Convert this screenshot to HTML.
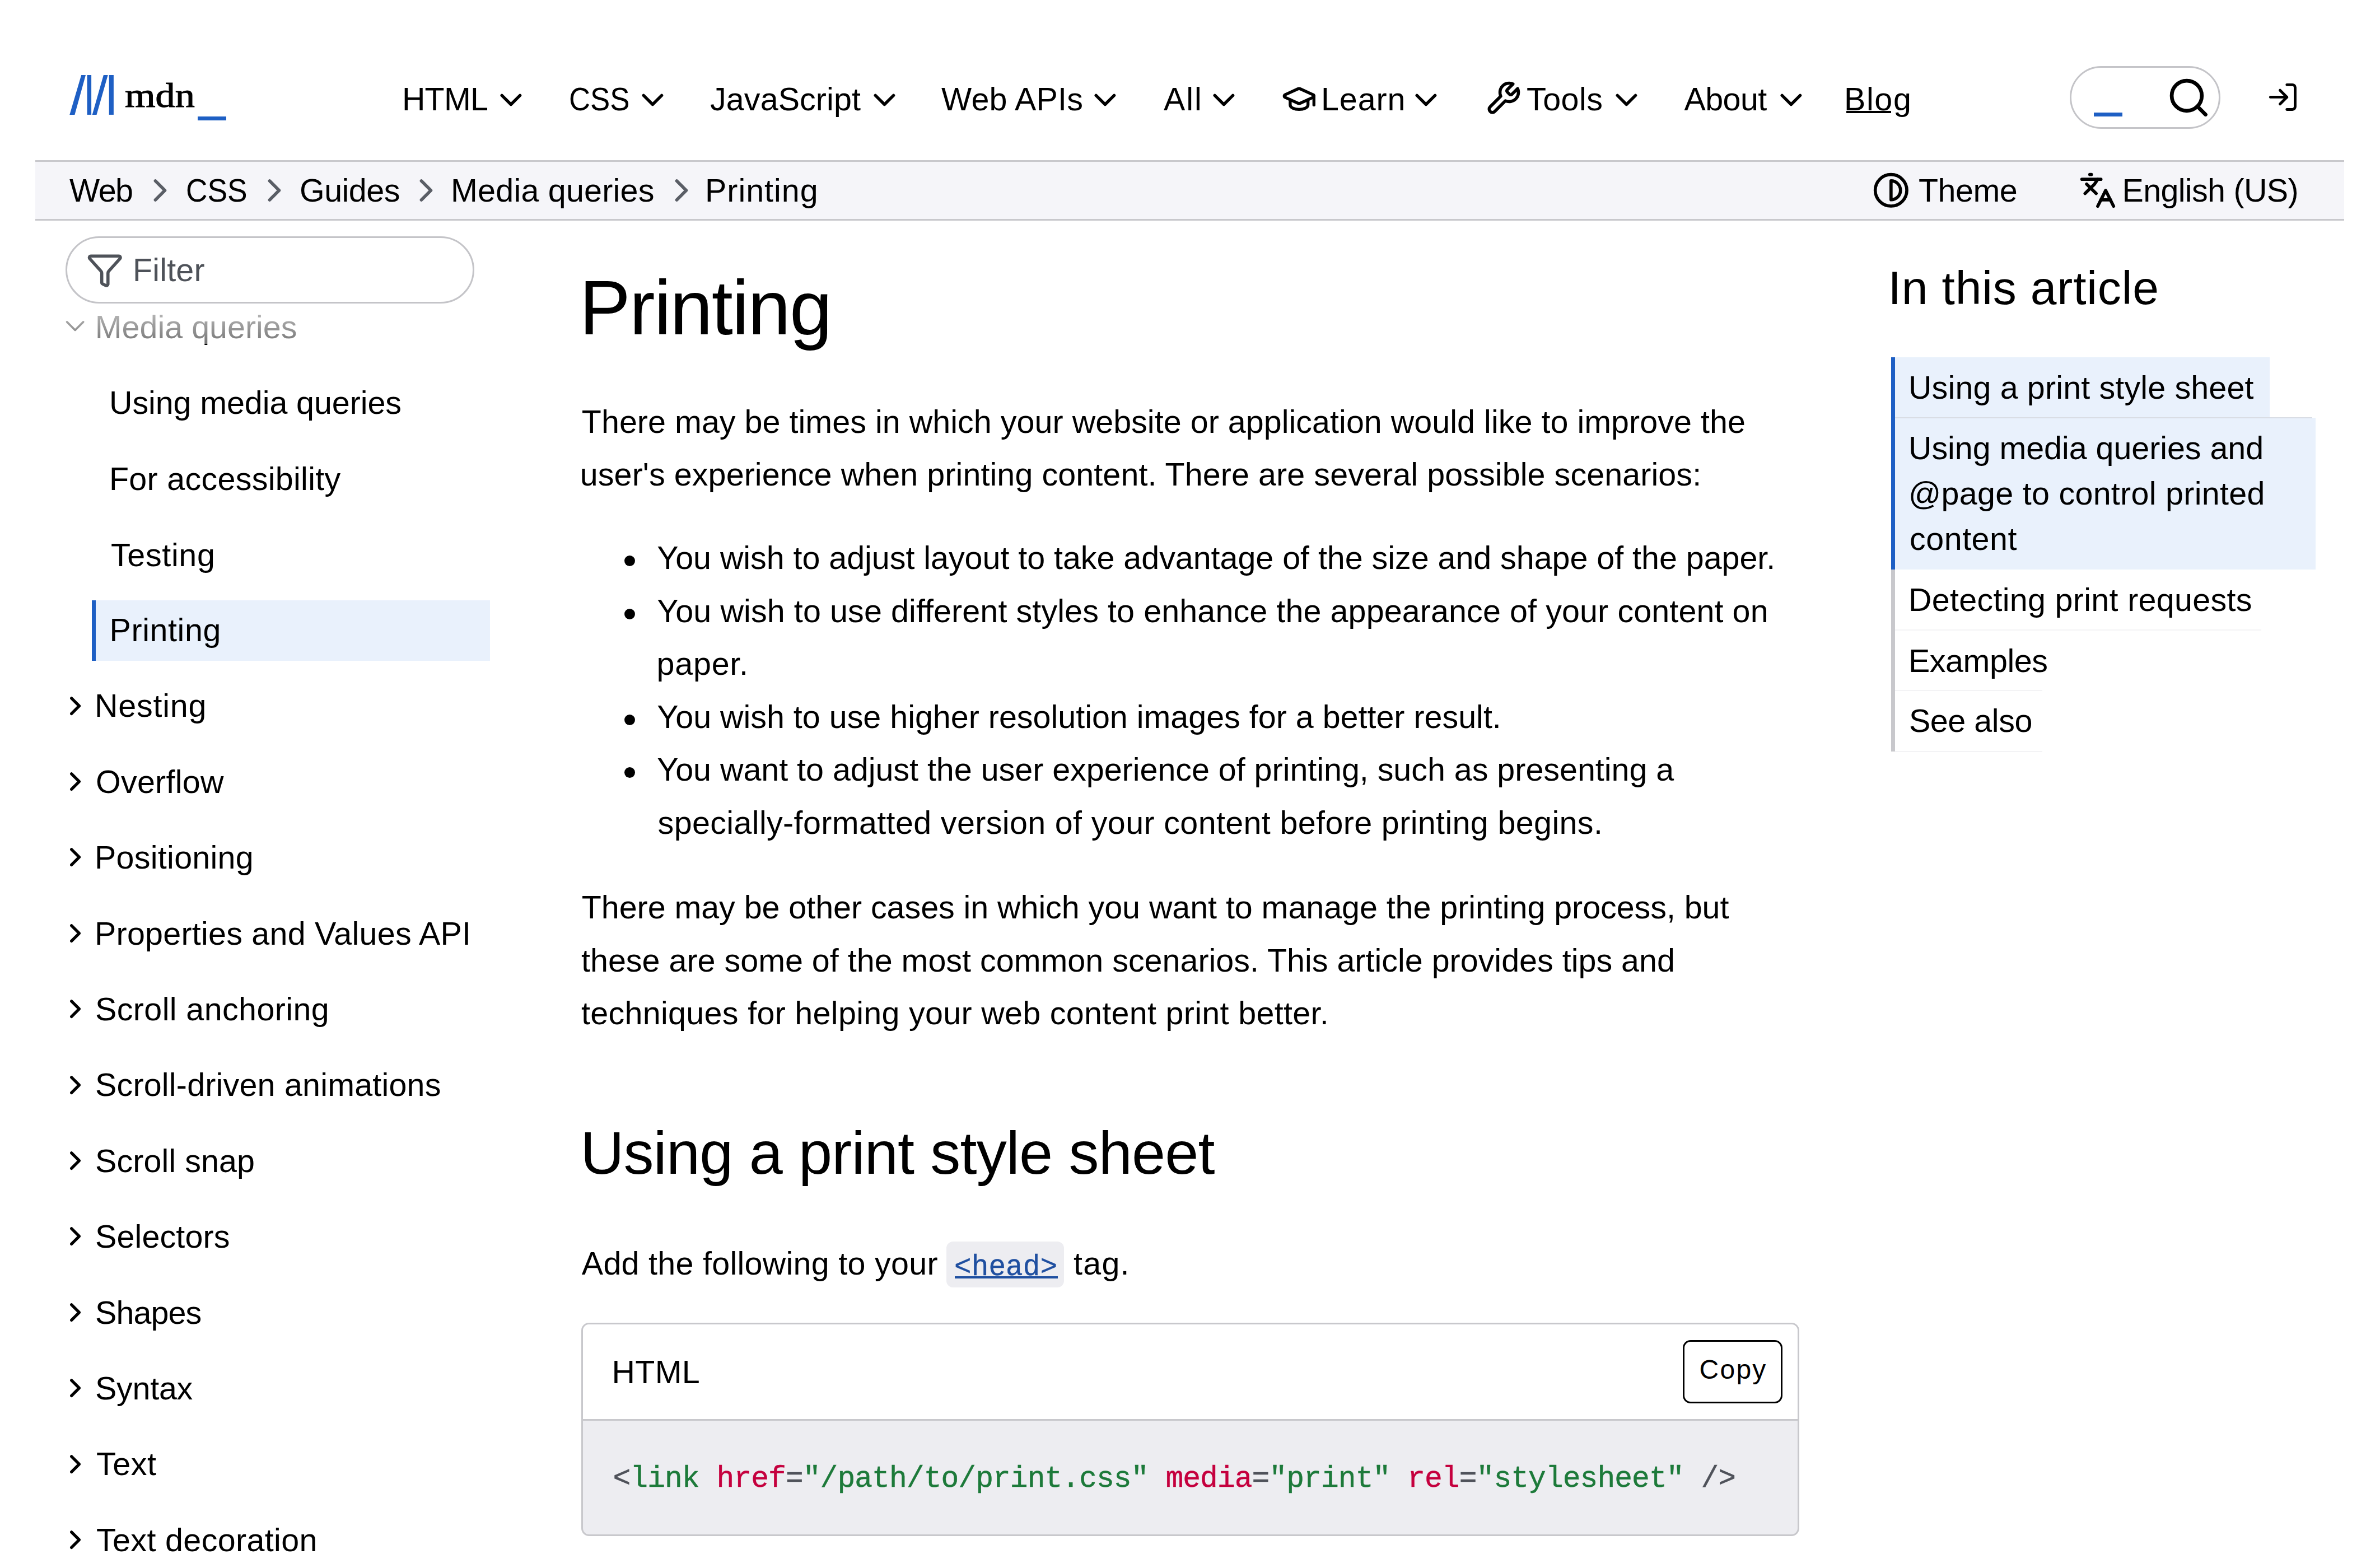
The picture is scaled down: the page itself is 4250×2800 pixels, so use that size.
<!DOCTYPE html>
<html><head><meta charset="utf-8"><title>Printing - CSS | MDN</title>
<style>
html,body{margin:0;padding:0;background:#fff;width:4250px;height:2800px;overflow:hidden;}
body{position:relative;font-family:'Liberation Sans', sans-serif;color:#000;}
.t{position:absolute;white-space:pre;}
.r{position:absolute;}
</style></head><body>
<svg class="r" style="left:120.0px;top:130.0px" width="90" height="80" viewBox="0 0 90 80"><g fill="#1e5fc4"><polygon points="4.3,74.9 13.4,74.9 33,4 25.2,4"/><rect x="35.6" y="4" width="7.5" height="70.9"/><polygon points="44.7,74.9 52.5,74.9 72.7,4 64.9,4"/><rect x="74.7" y="4" width="8.2" height="70.9"/></g></svg>
<div class="t" style="left:223.0px;top:139.6px;font-size:61px;line-height:61px;color:#000;font-family:'Liberation Serif', serif;letter-spacing:0.000px;-webkit-text-stroke:1.1px #000;transform:scaleX(1.15);transform-origin:0 0;">mdn</div>
<div class="r" style="left:352.5px;top:208.3px;width:51.5px;height:6.5px;background:#1e5fc4"></div>
<div class="t" style="left:717.9px;top:149.0px;font-size:57.4px;line-height:57.4px;color:#000;font-family:'Liberation Sans', sans-serif;letter-spacing:-0.733px;">HTML</div>
<svg class="r" style="left:879.5px;top:145.7px" width="64.8" height="64.8" viewBox="0 0 24 24" fill="none" stroke="#000" stroke-width="2" stroke-linecap="round" stroke-linejoin="round"><path d="m6 9 6 6 6-6"/></svg>
<div class="t" style="left:1016.0px;top:149.0px;font-size:57.4px;line-height:57.4px;color:#000;font-family:'Liberation Sans', sans-serif;letter-spacing:0.000px;transform:scaleX(0.9197);transform-origin:0 0;">CSS</div>
<svg class="r" style="left:1132.5px;top:145.7px" width="64.8" height="64.8" viewBox="0 0 24 24" fill="none" stroke="#000" stroke-width="2" stroke-linecap="round" stroke-linejoin="round"><path d="m6 9 6 6 6-6"/></svg>
<div class="t" style="left:1268.0px;top:149.0px;font-size:57.4px;line-height:57.4px;color:#000;font-family:'Liberation Sans', sans-serif;letter-spacing:0.111px;">JavaScript</div>
<svg class="r" style="left:1546.5px;top:145.7px" width="64.8" height="64.8" viewBox="0 0 24 24" fill="none" stroke="#000" stroke-width="2" stroke-linecap="round" stroke-linejoin="round"><path d="m6 9 6 6 6-6"/></svg>
<div class="t" style="left:1681.0px;top:149.0px;font-size:57.4px;line-height:57.4px;color:#000;font-family:'Liberation Sans', sans-serif;letter-spacing:0.286px;">Web APIs</div>
<svg class="r" style="left:1941.1px;top:145.7px" width="64.8" height="64.8" viewBox="0 0 24 24" fill="none" stroke="#000" stroke-width="2" stroke-linecap="round" stroke-linejoin="round"><path d="m6 9 6 6 6-6"/></svg>
<div class="t" style="left:2078.0px;top:149.0px;font-size:57.4px;line-height:57.4px;color:#000;font-family:'Liberation Sans', sans-serif;letter-spacing:2.000px;">All</div>
<svg class="r" style="left:2152.5px;top:145.7px" width="64.8" height="64.8" viewBox="0 0 24 24" fill="none" stroke="#000" stroke-width="2" stroke-linecap="round" stroke-linejoin="round"><path d="m6 9 6 6 6-6"/></svg>
<div class="t" style="left:2359.0px;top:149.0px;font-size:57.4px;line-height:57.4px;color:#000;font-family:'Liberation Sans', sans-serif;letter-spacing:0.900px;">Learn</div>
<svg class="r" style="left:2514.2px;top:145.7px" width="64.8" height="64.8" viewBox="0 0 24 24" fill="none" stroke="#000" stroke-width="2" stroke-linecap="round" stroke-linejoin="round"><path d="m6 9 6 6 6-6"/></svg>
<div class="t" style="left:2726.0px;top:149.0px;font-size:57.4px;line-height:57.4px;color:#000;font-family:'Liberation Sans', sans-serif;letter-spacing:0.500px;">Tools</div>
<svg class="r" style="left:2871.5px;top:145.7px" width="64.8" height="64.8" viewBox="0 0 24 24" fill="none" stroke="#000" stroke-width="2" stroke-linecap="round" stroke-linejoin="round"><path d="m6 9 6 6 6-6"/></svg>
<div class="t" style="left:3007.5px;top:149.0px;font-size:57.4px;line-height:57.4px;color:#000;font-family:'Liberation Sans', sans-serif;letter-spacing:-0.550px;">About</div>
<svg class="r" style="left:3165.5px;top:145.7px" width="64.8" height="64.8" viewBox="0 0 24 24" fill="none" stroke="#000" stroke-width="2" stroke-linecap="round" stroke-linejoin="round"><path d="m6 9 6 6 6-6"/></svg>
<div class="t" style="left:3293.0px;top:149.0px;font-size:57.4px;line-height:57.4px;color:#000;font-family:'Liberation Sans', sans-serif;letter-spacing:1.667px;">Blog</div>
<div class="r" style="left:3297.0px;top:198.0px;width:80.0px;height:3.5px;background:#000;"></div>
<svg class="r" style="left:2287.6px;top:145.0px" width="63.6" height="63.6" viewBox="0 0 24 24" fill="none" stroke="#000" stroke-width="2" stroke-linecap="round" stroke-linejoin="round"><path d="M21.42 10.922a1 1 0 0 0-.019-1.838L12.83 5.18a2 2 0 0 0-1.66 0L2.6 9.08a1 1 0 0 0 0 1.832l8.57 3.908a2 2 0 0 0 1.66 0z"/><path d="M22 10v6"/><path d="M6 12.5V16a6 3 0 0 0 12 0v-3.5"/></svg>
<svg class="r" style="left:2651.0px;top:143.0px" width="66.0" height="66.0" viewBox="0 0 24 24" fill="none" stroke="#000" stroke-width="2" stroke-linecap="round" stroke-linejoin="round"><path d="M14.7 6.3a1 1 0 0 0 0 1.4l1.6 1.6a1 1 0 0 0 1.4 0l3.77-3.77a6 6 0 0 1-7.94 7.94l-6.91 6.91a2.12 2.12 0 0 1-3-3l6.91-6.91a6 6 0 0 1 7.940-7.94l-3.76 3.76z"/></svg>
<div class="r" style="left:3696.0px;top:118.0px;width:269.0px;height:112.0px;border:3px solid #c4c4c8;border-radius:56px;box-sizing:border-box;"></div>
<div class="r" style="left:3739.0px;top:201.0px;width:51.0px;height:6.5px;background:#1e5fc4"></div>
<svg class="r" style="left:3868.0px;top:134.0px" width="80.6" height="80.6" viewBox="0 0 24 24" fill="none" stroke="#000" stroke-width="2" stroke-linecap="round" stroke-linejoin="round"><circle cx="11" cy="11" r="8"/><path d="m21 21-4.3-4.3"/></svg>
<svg class="r" style="left:4047.0px;top:143.9px" width="58.8" height="58.8" viewBox="0 0 24 24" fill="none" stroke="#000" stroke-width="2" stroke-linecap="round" stroke-linejoin="round"><path d="M15 3h4a2 2 0 0 1 2 2v14a2 2 0 0 1-2 2h-4"/><path d="m10 17 5-5-5-5"/><path d="M15 12H3"/></svg>
<div class="r" style="left:63.0px;top:286.0px;width:4123.0px;height:108.0px;background:#f5f5f9;border-top:3px solid #c8c8cc;border-bottom:3px solid #c8c8cc;box-sizing:border-box;"></div>
<div class="t" style="left:124.0px;top:311.6px;font-size:57.4px;line-height:57.4px;color:#000;font-family:'Liberation Sans', sans-serif;letter-spacing:-1.500px;">Web</div>
<div class="t" style="left:332.0px;top:311.6px;font-size:57.4px;line-height:57.4px;color:#000;font-family:'Liberation Sans', sans-serif;letter-spacing:0.000px;transform:scaleX(0.9286);transform-origin:0 0;">CSS</div>
<div class="t" style="left:535.0px;top:311.6px;font-size:57.4px;line-height:57.4px;color:#000;font-family:'Liberation Sans', sans-serif;letter-spacing:-0.480px;">Guides</div>
<div class="t" style="left:805.0px;top:311.6px;font-size:57.4px;line-height:57.4px;color:#000;font-family:'Liberation Sans', sans-serif;letter-spacing:0.250px;">Media queries</div>
<div class="t" style="left:1259.0px;top:311.6px;font-size:57.4px;line-height:57.4px;color:#000;font-family:'Liberation Sans', sans-serif;letter-spacing:1.000px;">Printing</div>
<svg class="r" style="left:252.2px;top:305.9px" width="67.9" height="67.9" viewBox="0 0 24 24" fill="none" stroke="#5a5e66" stroke-width="2" stroke-linecap="round" stroke-linejoin="round"><path d="m9 18 6-6-6-6"/></svg>
<svg class="r" style="left:456.1px;top:305.9px" width="67.9" height="67.9" viewBox="0 0 24 24" fill="none" stroke="#5a5e66" stroke-width="2" stroke-linecap="round" stroke-linejoin="round"><path d="m9 18 6-6-6-6"/></svg>
<svg class="r" style="left:727.1px;top:305.9px" width="67.9" height="67.9" viewBox="0 0 24 24" fill="none" stroke="#5a5e66" stroke-width="2" stroke-linecap="round" stroke-linejoin="round"><path d="m9 18 6-6-6-6"/></svg>
<svg class="r" style="left:1182.7px;top:305.9px" width="67.9" height="67.9" viewBox="0 0 24 24" fill="none" stroke="#5a5e66" stroke-width="2" stroke-linecap="round" stroke-linejoin="round"><path d="m9 18 6-6-6-6"/></svg>
<svg class="r" style="left:3342.9px;top:306.2px" width="67.7" height="67.7" viewBox="0 0 24 24" fill="none" stroke="#000" stroke-width="2" stroke-linecap="round" stroke-linejoin="round"><circle cx="12" cy="12" r="10"/><path d="M12 18a6 6 0 0 0 0-12v12z"/></svg>
<div class="t" style="left:3426.0px;top:311.6px;font-size:57.4px;line-height:57.4px;color:#000;font-family:'Liberation Sans', sans-serif;letter-spacing:-0.500px;">Theme</div>
<svg class="r" style="left:3711.9px;top:306.2px" width="67.9" height="67.9" viewBox="0 0 24 24" fill="none" stroke="#000" stroke-width="2" stroke-linecap="round" stroke-linejoin="round"><path d="m5 8 6 6"/><path d="m4 14 6-6 2-3"/><path d="M2 5h12"/><path d="M7 2h1"/><path d="m22 22-5-10-5 10"/><path d="M14 18h6"/></svg>
<div class="t" style="left:3789.5px;top:311.6px;font-size:57.4px;line-height:57.4px;color:#000;font-family:'Liberation Sans', sans-serif;letter-spacing:-0.636px;">English (US)</div>
<div class="r" style="left:117.0px;top:422.0px;width:730.0px;height:120.0px;border:3px solid #c4c4c8;border-radius:60px;box-sizing:border-box;"></div>
<svg class="r" style="left:154.4px;top:448.8px" width="66.5" height="66.5" viewBox="0 0 24 24" fill="none" stroke="#4e5259" stroke-width="2" stroke-linecap="round" stroke-linejoin="round"><path d="M10 20a1 1 0 0 0 .553.895l2 1A1 1 0 0 0 14 21v-7a2 2 0 0 1 .517-1.341L21.74 4.67A1 1 0 0 0 21 3H3a1 1 0 0 0-.742 1.67l7.225 7.989A2 2 0 0 1 10 14z"/></svg>
<div class="t" style="left:237.0px;top:453.9px;font-size:57.4px;line-height:57.4px;color:#4e5259;font-family:'Liberation Sans', sans-serif;letter-spacing:0.200px;">Filter</div>
<svg class="r" style="left:104.8px;top:553.0px" width="58.3" height="58.3" viewBox="0 0 24 24" fill="none" stroke="#000" stroke-width="1.5" stroke-linecap="round" stroke-linejoin="round"><path d="m6 9 6 6 6-6"/></svg>
<div class="t" style="left:169.8px;top:556.1px;font-size:57.4px;line-height:57.4px;color:#000;font-family:'Liberation Sans', sans-serif;letter-spacing:0.017px;">Media queries</div>
<div class="r" style="left:95.0px;top:545.0px;width:505.0px;height:69.0px;background:linear-gradient(rgba(255,255,255,.78), rgba(255,255,255,.46));"></div>
<div class="t" style="left:195.0px;top:690.8px;font-size:57.4px;line-height:57.4px;color:#000;font-family:'Liberation Sans', sans-serif;letter-spacing:-0.067px;">Using media queries</div>
<div class="t" style="left:195.0px;top:827.0px;font-size:57.4px;line-height:57.4px;color:#000;font-family:'Liberation Sans', sans-serif;letter-spacing:0.312px;">For accessibility</div>
<div class="t" style="left:198.0px;top:962.6px;font-size:57.4px;line-height:57.4px;color:#000;font-family:'Liberation Sans', sans-serif;letter-spacing:0.667px;">Testing</div>
<div class="r" style="left:164.0px;top:1072.0px;width:711.0px;height:108.0px;background:#e9f1fc;"></div>
<div class="r" style="left:164.0px;top:1072.0px;width:7.0px;height:108.0px;background:#1e5fc4;"></div>
<div class="t" style="left:195.6px;top:1097.4px;font-size:57.4px;line-height:57.4px;color:#000;font-family:'Liberation Sans', sans-serif;letter-spacing:0.600px;">Printing</div>
<div class="t" style="left:169.0px;top:1232.4px;font-size:57.4px;line-height:57.4px;color:#000;font-family:'Liberation Sans', sans-serif;letter-spacing:0.800px;">Nesting</div>
<svg class="r" style="left:107.1px;top:1232.5px" width="55.2" height="55.2" viewBox="0 0 24 24" fill="none" stroke="#000" stroke-width="2.3" stroke-linecap="round" stroke-linejoin="round"><path d="m9 18 6-6-6-6"/></svg>
<div class="t" style="left:171.0px;top:1367.8px;font-size:57.4px;line-height:57.4px;color:#000;font-family:'Liberation Sans', sans-serif;letter-spacing:0.286px;">Overflow</div>
<svg class="r" style="left:107.1px;top:1367.9px" width="55.2" height="55.2" viewBox="0 0 24 24" fill="none" stroke="#000" stroke-width="2.3" stroke-linecap="round" stroke-linejoin="round"><path d="m9 18 6-6-6-6"/></svg>
<div class="t" style="left:169.0px;top:1503.2px;font-size:57.4px;line-height:57.4px;color:#000;font-family:'Liberation Sans', sans-serif;letter-spacing:0.300px;">Positioning</div>
<svg class="r" style="left:107.1px;top:1503.3px" width="55.2" height="55.2" viewBox="0 0 24 24" fill="none" stroke="#000" stroke-width="2.3" stroke-linecap="round" stroke-linejoin="round"><path d="m9 18 6-6-6-6"/></svg>
<div class="t" style="left:169.0px;top:1638.6px;font-size:57.4px;line-height:57.4px;color:#000;font-family:'Liberation Sans', sans-serif;letter-spacing:0.258px;">Properties and Values API</div>
<svg class="r" style="left:107.1px;top:1638.7px" width="55.2" height="55.2" viewBox="0 0 24 24" fill="none" stroke="#000" stroke-width="2.3" stroke-linecap="round" stroke-linejoin="round"><path d="m9 18 6-6-6-6"/></svg>
<div class="t" style="left:170.0px;top:1774.0px;font-size:57.4px;line-height:57.4px;color:#000;font-family:'Liberation Sans', sans-serif;letter-spacing:0.413px;">Scroll anchoring</div>
<svg class="r" style="left:107.1px;top:1774.1px" width="55.2" height="55.2" viewBox="0 0 24 24" fill="none" stroke="#000" stroke-width="2.3" stroke-linecap="round" stroke-linejoin="round"><path d="m9 18 6-6-6-6"/></svg>
<div class="t" style="left:170.0px;top:1909.4px;font-size:57.4px;line-height:57.4px;color:#000;font-family:'Liberation Sans', sans-serif;letter-spacing:0.217px;">Scroll-driven animations</div>
<svg class="r" style="left:107.1px;top:1909.5px" width="55.2" height="55.2" viewBox="0 0 24 24" fill="none" stroke="#000" stroke-width="2.3" stroke-linecap="round" stroke-linejoin="round"><path d="m9 18 6-6-6-6"/></svg>
<div class="t" style="left:170.0px;top:2044.8px;font-size:57.4px;line-height:57.4px;color:#000;font-family:'Liberation Sans', sans-serif;letter-spacing:0.100px;">Scroll snap</div>
<svg class="r" style="left:107.1px;top:2044.9px" width="55.2" height="55.2" viewBox="0 0 24 24" fill="none" stroke="#000" stroke-width="2.3" stroke-linecap="round" stroke-linejoin="round"><path d="m9 18 6-6-6-6"/></svg>
<div class="t" style="left:170.0px;top:2180.2px;font-size:57.4px;line-height:57.4px;color:#000;font-family:'Liberation Sans', sans-serif;letter-spacing:0.150px;">Selectors</div>
<svg class="r" style="left:107.1px;top:2180.3px" width="55.2" height="55.2" viewBox="0 0 24 24" fill="none" stroke="#000" stroke-width="2.3" stroke-linecap="round" stroke-linejoin="round"><path d="m9 18 6-6-6-6"/></svg>
<div class="t" style="left:170.0px;top:2315.6px;font-size:57.4px;line-height:57.4px;color:#000;font-family:'Liberation Sans', sans-serif;letter-spacing:-0.880px;">Shapes</div>
<svg class="r" style="left:107.1px;top:2315.7px" width="55.2" height="55.2" viewBox="0 0 24 24" fill="none" stroke="#000" stroke-width="2.3" stroke-linecap="round" stroke-linejoin="round"><path d="m9 18 6-6-6-6"/></svg>
<div class="t" style="left:170.0px;top:2451.0px;font-size:57.4px;line-height:57.4px;color:#000;font-family:'Liberation Sans', sans-serif;letter-spacing:-0.240px;">Syntax</div>
<svg class="r" style="left:107.1px;top:2451.1px" width="55.2" height="55.2" viewBox="0 0 24 24" fill="none" stroke="#000" stroke-width="2.3" stroke-linecap="round" stroke-linejoin="round"><path d="m9 18 6-6-6-6"/></svg>
<div class="t" style="left:172.0px;top:2586.4px;font-size:57.4px;line-height:57.4px;color:#000;font-family:'Liberation Sans', sans-serif;letter-spacing:0.533px;">Text</div>
<svg class="r" style="left:107.1px;top:2586.5px" width="55.2" height="55.2" viewBox="0 0 24 24" fill="none" stroke="#000" stroke-width="2.3" stroke-linecap="round" stroke-linejoin="round"><path d="m9 18 6-6-6-6"/></svg>
<div class="t" style="left:172.0px;top:2721.8px;font-size:57.4px;line-height:57.4px;color:#000;font-family:'Liberation Sans', sans-serif;letter-spacing:0.371px;">Text decoration</div>
<svg class="r" style="left:107.1px;top:2721.9px" width="55.2" height="55.2" viewBox="0 0 24 24" fill="none" stroke="#000" stroke-width="2.3" stroke-linecap="round" stroke-linejoin="round"><path d="m9 18 6-6-6-6"/></svg>
<div class="t" style="left:1034.6px;top:481.0px;font-size:137px;line-height:137px;color:#000;font-family:'Liberation Sans', sans-serif;letter-spacing:-1.857px;">Printing</div>
<div class="t" style="left:1038.8px;top:724.7px;font-size:57.4px;line-height:57.4px;color:#000;font-family:'Liberation Sans', sans-serif;letter-spacing:0.058px;">There may be times in which your website or application would like to improve the</div>
<div class="t" style="left:1035.8px;top:819.2px;font-size:57.4px;line-height:57.4px;color:#000;font-family:'Liberation Sans', sans-serif;letter-spacing:0.106px;">user&#x27;s experience when printing content. There are several possible scenarios:</div>
<div class="t" style="left:1173.2px;top:968.4px;font-size:57.4px;line-height:57.4px;color:#000;font-family:'Liberation Sans', sans-serif;letter-spacing:-0.018px;">You wish to adjust layout to take advantage of the size and shape of the paper.</div>
<div class="r" style="left:1114.5px;top:992.0px;width:19.0px;height:19.0px;background:#000;border-radius:50%;"></div>
<div class="t" style="left:1173.2px;top:1062.9px;font-size:57.4px;line-height:57.4px;color:#000;font-family:'Liberation Sans', sans-serif;letter-spacing:0.124px;">You wish to use different styles to enhance the appearance of your content on</div>
<div class="r" style="left:1114.5px;top:1086.5px;width:19.0px;height:19.0px;background:#000;border-radius:50%;"></div>
<div class="t" style="left:1172.6px;top:1157.4px;font-size:57.4px;line-height:57.4px;color:#000;font-family:'Liberation Sans', sans-serif;letter-spacing:0.760px;">paper.</div>
<div class="t" style="left:1173.2px;top:1251.9px;font-size:57.4px;line-height:57.4px;color:#000;font-family:'Liberation Sans', sans-serif;letter-spacing:0.013px;">You wish to use higher resolution images for a better result.</div>
<div class="r" style="left:1114.5px;top:1275.5px;width:19.0px;height:19.0px;background:#000;border-radius:50%;"></div>
<div class="t" style="left:1173.2px;top:1346.4px;font-size:57.4px;line-height:57.4px;color:#000;font-family:'Liberation Sans', sans-serif;letter-spacing:-0.006px;">You want to adjust the user experience of printing, such as presenting a</div>
<div class="r" style="left:1114.5px;top:1370.0px;width:19.0px;height:19.0px;background:#000;border-radius:50%;"></div>
<div class="t" style="left:1174.6px;top:1440.9px;font-size:57.4px;line-height:57.4px;color:#000;font-family:'Liberation Sans', sans-serif;letter-spacing:0.382px;">specially-formatted version of your content before printing begins.</div>
<div class="t" style="left:1038.8px;top:1592.0px;font-size:57.4px;line-height:57.4px;color:#000;font-family:'Liberation Sans', sans-serif;letter-spacing:-0.034px;">There may be other cases in which you want to manage the printing process, but</div>
<div class="t" style="left:1038.0px;top:1686.5px;font-size:57.4px;line-height:57.4px;color:#000;font-family:'Liberation Sans', sans-serif;letter-spacing:0.024px;">these are some of the most common scenarios. This article provides tips and</div>
<div class="t" style="left:1038.0px;top:1781.0px;font-size:57.4px;line-height:57.4px;color:#000;font-family:'Liberation Sans', sans-serif;letter-spacing:0.327px;">techniques for helping your web content print better.</div>
<div class="t" style="left:1036.4px;top:2005.3px;font-size:108px;line-height:108px;color:#000;font-family:'Liberation Sans', sans-serif;letter-spacing:-0.813px;">Using a print style sheet</div>
<div class="t" style="left:1038.8px;top:2228.2px;font-size:57.4px;line-height:57.4px;color:#000;font-family:'Liberation Sans', sans-serif;letter-spacing:0.300px;">Add the following to your</div>
<div class="r" style="left:1690.0px;top:2216.6px;width:209.5px;height:82.2px;background:#ededf1;border-radius:12px;"></div>
<div class="t" style="left:1704.0px;top:2237.7px;font-size:51px;line-height:51px;color:#1f4fa0;font-family:'Liberation Mono', monospace;letter-spacing:0.100px;-webkit-text-stroke:0.4px;">&lt;head&gt;</div>
<div class="r" style="left:1705.0px;top:2279.3px;width:184.0px;height:3.7px;background:#1f4fa0;"></div>
<div class="t" style="left:1917.0px;top:2228.2px;font-size:57.4px;line-height:57.4px;color:#000;font-family:'Liberation Sans', sans-serif;letter-spacing:1.267px;">tag.</div>
<div class="r" style="left:1037.5px;top:2361.5px;width:2175.5px;height:381.5px;border:3px solid #c8c8cc;border-radius:14px;box-sizing:border-box;overflow:hidden;background:#ededf1;"></div>
<div class="r" style="left:1040.5px;top:2364.5px;width:2169.5px;height:170.5px;background:#fff;border-radius:11px 11px 0 0;"></div>
<div class="r" style="left:1040.5px;top:2533.5px;width:2169.5px;height:3.5px;background:#c8c8cc;"></div>
<div class="t" style="left:1092.5px;top:2422.4px;font-size:57.4px;line-height:57.4px;color:#000;font-family:'Liberation Sans', sans-serif;letter-spacing:0.333px;">HTML</div>
<div class="r" style="left:3005.0px;top:2393.0px;width:178.0px;height:112.5px;border:3.5px solid #000;border-radius:14px;box-sizing:border-box;background:#fff;"></div>
<div class="t" style="left:3034.5px;top:2421.9px;font-size:48px;line-height:48px;color:#000;font-family:'Liberation Sans', sans-serif;letter-spacing:2.267px;">Copy</div>
<div class="t" style="left:1094.5px;top:2614.9px;font-size:52.9px;line-height:52.9px;color:#000;font-family:'Liberation Mono', monospace;letter-spacing:-0.900px;-webkit-text-stroke:0.5px;"><span style="color:#4f525a">&lt;</span><span style="color:#1d7a3a">link</span> <span style="color:#c5003e">href</span><span style="color:#4f525a">=</span><span style="color:#1d7a3a">"/path/to/print.css"</span> <span style="color:#c5003e">media</span><span style="color:#4f525a">=</span><span style="color:#1d7a3a">"print"</span> <span style="color:#c5003e">rel</span><span style="color:#4f525a">=</span><span style="color:#1d7a3a">"stylesheet"</span> <span style="color:#4f525a">/&gt;</span></div>
<div class="t" style="left:3371.6px;top:472.2px;font-size:84px;line-height:84px;color:#000;font-family:'Liberation Sans', sans-serif;letter-spacing:0.843px;">In this article</div>
<div class="r" style="left:3376.8px;top:637.8px;width:7.2px;height:704.2px;background:#c8c8cc;"></div>
<div class="r" style="left:3384.0px;top:637.8px;width:669.4px;height:108.2px;background:#e9f1fc;"></div>
<div class="r" style="left:3384.0px;top:746.0px;width:751.0px;height:271.0px;background:#e9f1fc;"></div>
<div class="r" style="left:3384.0px;top:745.0px;width:745.0px;height:1.5px;background:#d9dde4;"></div>
<div class="r" style="left:3376.8px;top:637.8px;width:7.2px;height:379.2px;background:#1e5fc4;"></div>
<div class="r" style="left:3384.0px;top:1123.8px;width:654.0px;height:2.0px;background:#f3f3f5;"></div>
<div class="r" style="left:3384.0px;top:1231.6px;width:263.0px;height:2.0px;background:#f3f3f5;"></div>
<div class="r" style="left:3384.0px;top:1341.0px;width:263.0px;height:2.0px;background:#f3f3f5;"></div>
<div class="t" style="left:3408.0px;top:664.3px;font-size:57.4px;line-height:57.4px;color:#000;font-family:'Liberation Sans', sans-serif;letter-spacing:0.167px;">Using a print style sheet</div>
<div class="t" style="left:3408.0px;top:772.2px;font-size:57.4px;line-height:57.4px;color:#000;font-family:'Liberation Sans', sans-serif;letter-spacing:-0.036px;">Using media queries and</div>
<div class="t" style="left:3408.0px;top:853.2px;font-size:57.4px;line-height:57.4px;color:#000;font-family:'Liberation Sans', sans-serif;letter-spacing:0.304px;">@page to control printed</div>
<div class="t" style="left:3410.0px;top:934.2px;font-size:57.4px;line-height:57.4px;color:#000;font-family:'Liberation Sans', sans-serif;letter-spacing:0.533px;">content</div>
<div class="t" style="left:3408.0px;top:1042.9px;font-size:57.4px;line-height:57.4px;color:#000;font-family:'Liberation Sans', sans-serif;letter-spacing:0.322px;">Detecting print requests</div>
<div class="t" style="left:3408.0px;top:1151.9px;font-size:57.4px;line-height:57.4px;color:#000;font-family:'Liberation Sans', sans-serif;letter-spacing:-0.429px;">Examples</div>
<div class="t" style="left:3409.0px;top:1259.4px;font-size:57.4px;line-height:57.4px;color:#000;font-family:'Liberation Sans', sans-serif;letter-spacing:-0.429px;">See also</div>
</body></html>
